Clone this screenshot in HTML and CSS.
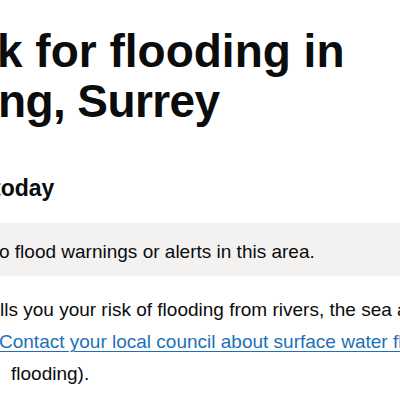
FILE: index.html
```html
<!DOCTYPE html>
<html lang="en">
<head>
<meta charset="utf-8">
<title>Flood risk</title>
<link rel="stylesheet" href="styles.css">
</head>
<body>
<main class="page">
  <h1 class="title"><span class="title-line">k for flooding in</span><span class="title-line title-line--2">ng, Surrey</span></h1>
  <h2 class="subtitle">today</h2>
  <div class="panel">
    <p class="panel-text">o flood warnings or alerts in this area.</p>
  </div>
  <p class="body-text">
    <span class="body-line body-line--1">lls you your risk of flooding from rivers, the sea and groundwater.</span>
    <span class="body-line body-line--2"><a class="link" href="#">Contact your local council about surface water flooding</a></span>
    <span class="body-line body-line--3">flooding).</span>
  </p>
</main>
</body>
</html>
```
FILE: styles.css
```css
html, body {
  margin: 0;
  padding: 0;
  background: #ffffff;
}

body {
  width: 400px;
  height: 400px;
  overflow: hidden;
  font-family: "Liberation Sans", Arial, sans-serif;
  color: #0b0c0c;
}

.page {
  display: flex;
  flex-direction: column;
}

.title {
  margin: 26px 0 0 -3px;
  font-size: 46px;
  line-height: 50px;
  font-weight: 700;
  white-space: nowrap;
}

.title-line {
  display: block;
}

.title-line--2 {
  margin-left: 1px;
  letter-spacing: -0.6px;
}

.subtitle {
  margin: 47px 0 0 -7px;
  font-size: 23px;
  line-height: 30px;
  font-weight: 700;
}

.panel {
  margin-top: 20px;
  padding: 16px 0 12px 0;
  background: #f3f2f1;
}

.panel-text {
  margin: 0 0 0 -1px;
  font-size: 19px;
  line-height: 25px;
  white-space: nowrap;
}

.body-text {
  margin: 18px 0 0 0;
  font-size: 19px;
  line-height: 32px;
  white-space: nowrap;
}

.body-line {
  display: block;
}

.body-line--1 {
  margin-left: 0;
}

.body-line--2 {
  margin-left: -1px;
}

.body-line--3 {
  margin-left: 11px;
}

.link {
  color: #1d70b8;
  text-decoration: underline;
  text-decoration-thickness: 1px;
  text-underline-offset: 3px;
}
```
